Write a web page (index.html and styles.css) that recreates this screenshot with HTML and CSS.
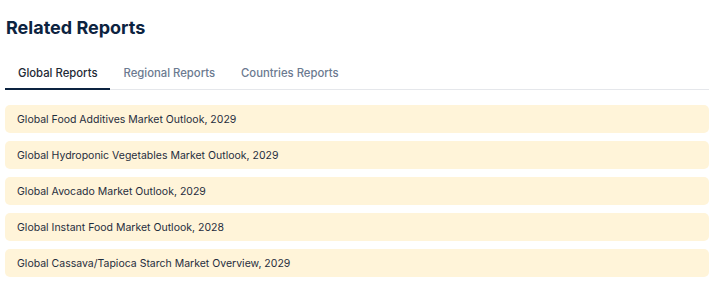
FILE: index.html
```html
<!DOCTYPE html>
<html lang="en">
<head>
<meta charset="utf-8">
<title>Related Reports</title>
<link rel="stylesheet" href="styles.css">
</head>
<body>
<section class="related">
  <h2 class="title">Related Reports</h2>
  <nav class="tabs">
    <a class="tab active">Global Reports</a>
    <a class="tab">Regional Reports</a>
    <a class="tab">Countries Reports</a>
  </nav>
  <ul class="list">
    <li class="item">Global Food Additives Market Outlook, 2029</li>
    <li class="item">Global Hydroponic Vegetables Market Outlook, 2029</li>
    <li class="item">Global Avocado Market Outlook, 2029</li>
    <li class="item">Global Instant Food Market Outlook, 2028</li>
    <li class="item">Global Cassava/Tapioca Starch Market Overview, 2029</li>
  </ul>
</section>
</body>
</html>
```
FILE: styles.css
```css
* { box-sizing: border-box; }
body {
  margin: 0;
  background: #fff;
  font-family: Inter, "Noto Sans", sans-serif;
}
.related {
  padding: 14px 5px 0 5px;
}
.title {
  margin: 0 0 0 1px;
  font-size: 18px;
  line-height: 28px;
  font-weight: 700;
  color: #0c2340;
}
.tabs {
  display: flex;
  margin-top: 18px;
  border-bottom: 1px solid #e5e7eb;
}
.tab {
  padding: 0 13px 2px;
  font-size: 11.3px;
  line-height: 26px;
  font-weight: 500;
  color: #6b7a90;
  border-bottom: 2px solid transparent;
  margin-bottom: -1px;
}
.tab.active {
  color: #1e2a36;
  border-bottom-color: #0c2340;
}
.list {
  list-style: none;
  margin: 15px 0 0 0;
  padding: 0;
  display: flex;
  flex-direction: column;
  gap: 8px;
}
.item {
  background: #fff4d9;
  border-radius: 5px;
  height: 28px;
  padding: 0 12px;
  display: flex;
  align-items: center;
  font-size: 10.5px;
  color: #1f2d3d;
}
```
